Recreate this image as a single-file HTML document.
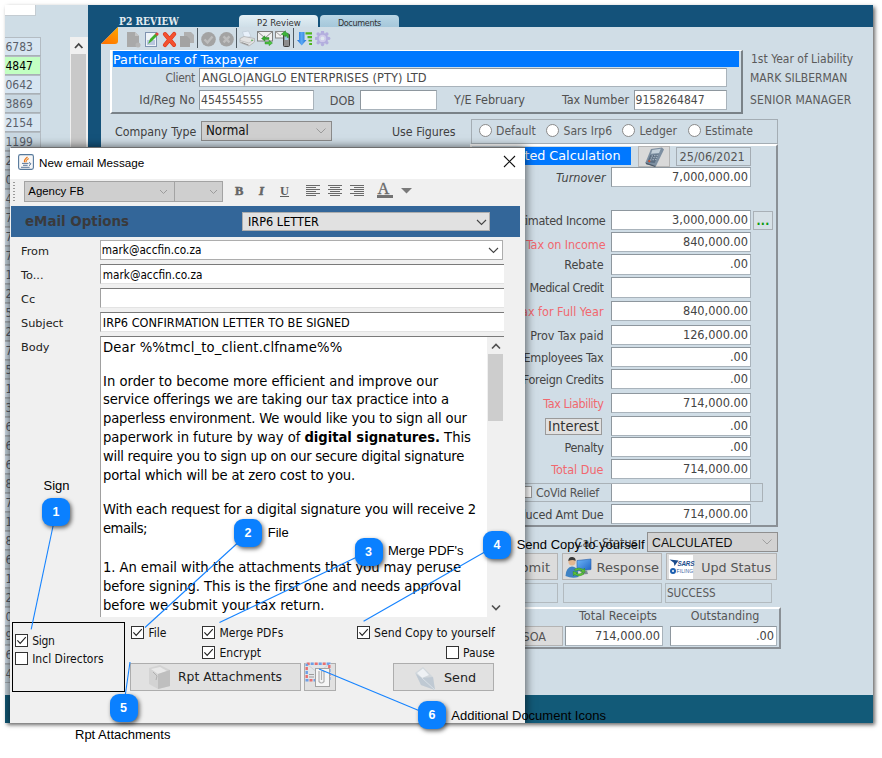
<!DOCTYPE html>
<html><head><meta charset="utf-8"><title>New email Message</title>
<style>
html,body{margin:0;padding:0}
body{width:882px;height:758px;background:#fff;position:relative;overflow:hidden;font-family:"DejaVu Sans Condensed","Liberation Sans",sans-serif;font-size:12px;color:#4a4a4a}
div,span{position:absolute;box-sizing:border-box;white-space:nowrap}
.app{font-family:"DejaVu Sans Condensed","Liberation Sans",sans-serif}
.ui{font-family:"Liberation Sans",sans-serif}
.vd{font-family:"DejaVu Sans",sans-serif}
.fld{background:#fff;border:1px solid #a9b3bb;border-top-color:#8e979e;border-left-color:#8e979e}
.num{text-align:right;font-size:12.650px;color:#444;padding-right:2px;line-height:18px}
.lbl{font-size:12.5px;color:#3c3c3c;text-align:right}
.red{color:#f0606a}
.bt{font-size:13.2px;line-height:19px;color:#000}
</style></head><body>
<!--SHOT-->
<div id="shot" style="left:5px;top:5px;width:868px;height:718px;background:#d0dde6;box-shadow:2px 2px 4px rgba(0,0,0,.6);overflow:hidden"></div>
<!--LEFT-->
<div style="left:5px;top:5px;width:83px;height:718px;background:#cfdde6"></div>
<div style="left:5px;top:5px;width:31px;height:11px;background:#fff;border-right:1px solid #c4ccd2;border-bottom:1px solid #c4ccd2"></div>
<div style="left:5px;top:37px;width:36px;height:19px;background:#d7e5f1;border:1px solid #b4bcc3;border-left:none;border-bottom-color:#a9b0b6;color:#5a5f6a;font-size:12px;line-height:18px;padding-left:0.5px">6783</div>
<div style="left:5px;top:56px;width:36px;height:19px;background:#c2ffc2;border:1px solid #b4bcc3;border-left:none;border-bottom-color:#a9b0b6;color:#000;font-size:12px;line-height:18px;padding-left:0.5px">4847</div>
<div style="left:5px;top:75px;width:36px;height:19px;background:#d7e5f1;border:1px solid #b4bcc3;border-left:none;border-bottom-color:#a9b0b6;color:#5a5f6a;font-size:12px;line-height:18px;padding-left:0.5px">0642</div>
<div style="left:5px;top:94px;width:36px;height:19px;background:#c9d8e2;border:1px solid #b4bcc3;border-left:none;border-bottom-color:#a9b0b6;color:#5a5f6a;font-size:12px;line-height:18px;padding-left:0.5px">3869</div>
<div style="left:5px;top:113px;width:36px;height:19px;background:#d7e5f1;border:1px solid #b4bcc3;border-left:none;border-bottom-color:#a9b0b6;color:#5a5f6a;font-size:12px;line-height:18px;padding-left:0.5px">2154</div>
<div style="left:5px;top:132px;width:36px;height:19px;background:#c9d8e2;border:1px solid #b4bcc3;border-left:none;border-bottom-color:#a9b0b6;color:#5a5f6a;font-size:12px;line-height:18px;padding-left:0.5px">1199</div>
<div style="left:5px;top:151px;width:36px;height:19px;background:#d7e5f1;border:1px solid #b4bcc3;border-left:none;border-bottom-color:#a9b0b6;color:#5a5f6a;font-size:12px;line-height:18px;padding-left:0.5px">2877</div>
<div style="left:5px;top:170px;width:36px;height:19px;background:#c9d8e2;border:1px solid #b4bcc3;border-left:none;border-bottom-color:#a9b0b6;color:#5a5f6a;font-size:12px;line-height:18px;padding-left:0.5px">0311</div>
<div style="left:5px;top:189px;width:36px;height:19px;background:#d7e5f1;border:1px solid #b4bcc3;border-left:none;border-bottom-color:#a9b0b6;color:#5a5f6a;font-size:12px;line-height:18px;padding-left:0.5px">4520</div>
<div style="left:5px;top:208px;width:36px;height:19px;background:#c9d8e2;border:1px solid #b4bcc3;border-left:none;border-bottom-color:#a9b0b6;color:#5a5f6a;font-size:12px;line-height:18px;padding-left:0.5px">7733</div>
<div style="left:5px;top:227px;width:36px;height:19px;background:#d7e5f1;border:1px solid #b4bcc3;border-left:none;border-bottom-color:#a9b0b6;color:#5a5f6a;font-size:12px;line-height:18px;padding-left:0.5px">7018</div>
<div style="left:5px;top:246px;width:36px;height:19px;background:#c9d8e2;border:1px solid #b4bcc3;border-left:none;border-bottom-color:#a9b0b6;color:#5a5f6a;font-size:12px;line-height:18px;padding-left:0.5px">7245</div>
<div style="left:5px;top:265px;width:36px;height:19px;background:#d7e5f1;border:1px solid #b4bcc3;border-left:none;border-bottom-color:#a9b0b6;color:#5a5f6a;font-size:12px;line-height:18px;padding-left:0.5px">1190</div>
<div style="left:5px;top:284px;width:36px;height:19px;background:#c9d8e2;border:1px solid #b4bcc3;border-left:none;border-bottom-color:#a9b0b6;color:#5a5f6a;font-size:12px;line-height:18px;padding-left:0.5px">2264</div>
<div style="left:5px;top:303px;width:36px;height:19px;background:#d7e5f1;border:1px solid #b4bcc3;border-left:none;border-bottom-color:#a9b0b6;color:#5a5f6a;font-size:12px;line-height:18px;padding-left:0.5px">5102</div>
<div style="left:5px;top:322px;width:36px;height:19px;background:#c9d8e2;border:1px solid #b4bcc3;border-left:none;border-bottom-color:#a9b0b6;color:#5a5f6a;font-size:12px;line-height:18px;padding-left:0.5px">2471</div>
<div style="left:5px;top:341px;width:36px;height:19px;background:#d7e5f1;border:1px solid #b4bcc3;border-left:none;border-bottom-color:#a9b0b6;color:#5a5f6a;font-size:12px;line-height:18px;padding-left:0.5px">7719</div>
<div style="left:5px;top:360px;width:36px;height:19px;background:#c9d8e2;border:1px solid #b4bcc3;border-left:none;border-bottom-color:#a9b0b6;color:#5a5f6a;font-size:12px;line-height:18px;padding-left:0.5px">5530</div>
<div style="left:5px;top:379px;width:36px;height:19px;background:#d7e5f1;border:1px solid #b4bcc3;border-left:none;border-bottom-color:#a9b0b6;color:#5a5f6a;font-size:12px;line-height:18px;padding-left:0.5px">1284</div>
<div style="left:5px;top:398px;width:36px;height:19px;background:#c9d8e2;border:1px solid #b4bcc3;border-left:none;border-bottom-color:#a9b0b6;color:#5a5f6a;font-size:12px;line-height:18px;padding-left:0.5px">3905</div>
<div style="left:5px;top:417px;width:36px;height:19px;background:#d7e5f1;border:1px solid #b4bcc3;border-left:none;border-bottom-color:#a9b0b6;color:#5a5f6a;font-size:12px;line-height:18px;padding-left:0.5px">6017</div>
<div style="left:5px;top:436px;width:36px;height:19px;background:#c9d8e2;border:1px solid #b4bcc3;border-left:none;border-bottom-color:#a9b0b6;color:#5a5f6a;font-size:12px;line-height:18px;padding-left:0.5px">6648</div>
<div style="left:5px;top:455px;width:36px;height:19px;background:#d7e5f1;border:1px solid #b4bcc3;border-left:none;border-bottom-color:#a9b0b6;color:#5a5f6a;font-size:12px;line-height:18px;padding-left:0.5px">6120</div>
<div style="left:5px;top:474px;width:36px;height:19px;background:#c9d8e2;border:1px solid #b4bcc3;border-left:none;border-bottom-color:#a9b0b6;color:#5a5f6a;font-size:12px;line-height:18px;padding-left:0.5px">8342</div>
<div style="left:5px;top:493px;width:36px;height:19px;background:#d7e5f1;border:1px solid #b4bcc3;border-left:none;border-bottom-color:#a9b0b6;color:#5a5f6a;font-size:12px;line-height:18px;padding-left:0.5px">7754</div>
<div style="left:5px;top:512px;width:36px;height:19px;background:#c9d8e2;border:1px solid #b4bcc3;border-left:none;border-bottom-color:#a9b0b6;color:#5a5f6a;font-size:12px;line-height:18px;padding-left:0.5px">1163</div>
<div style="left:5px;top:531px;width:36px;height:19px;background:#d7e5f1;border:1px solid #b4bcc3;border-left:none;border-bottom-color:#a9b0b6;color:#5a5f6a;font-size:12px;line-height:18px;padding-left:0.5px">8871</div>
<div style="left:5px;top:550px;width:36px;height:19px;background:#c9d8e2;border:1px solid #b4bcc3;border-left:none;border-bottom-color:#a9b0b6;color:#5a5f6a;font-size:12px;line-height:18px;padding-left:0.5px">6620</div>
<div style="left:5px;top:569px;width:36px;height:19px;background:#d7e5f1;border:1px solid #b4bcc3;border-left:none;border-bottom-color:#a9b0b6;color:#5a5f6a;font-size:12px;line-height:18px;padding-left:0.5px">1439</div>
<div style="left:5px;top:588px;width:36px;height:19px;background:#c9d8e2;border:1px solid #b4bcc3;border-left:none;border-bottom-color:#a9b0b6;color:#5a5f6a;font-size:12px;line-height:18px;padding-left:0.5px">2208</div>
<div style="left:5px;top:607px;width:36px;height:19px;background:#d7e5f1;border:1px solid #b4bcc3;border-left:none;border-bottom-color:#a9b0b6;color:#5a5f6a;font-size:12px;line-height:18px;padding-left:0.5px">0915</div>
<div style="left:5px;top:626px;width:36px;height:19px;background:#c9d8e2;border:1px solid #b4bcc3;border-left:none;border-bottom-color:#a9b0b6;color:#5a5f6a;font-size:12px;line-height:18px;padding-left:0.5px">9127</div>
<div style="left:5px;top:645px;width:36px;height:19px;background:#d7e5f1;border:1px solid #b4bcc3;border-left:none;border-bottom-color:#a9b0b6;color:#5a5f6a;font-size:12px;line-height:18px;padding-left:0.5px">6004</div>
<div style="left:5px;top:664px;width:36px;height:19px;background:#c9d8e2;border:1px solid #b4bcc3;border-left:none;border-bottom-color:#a9b0b6;color:#5a5f6a;font-size:12px;line-height:18px;padding-left:0.5px">4410</div>
<div style="left:70px;top:37px;width:18px;height:656px;background:#f0f0f0"></div>
<div style="left:71px;top:54px;width:15px;height:200px;background:#c9c9c9"></div>
<svg style="position:absolute;left:70px;top:37px" width="18" height="17" viewBox="0 0 18 17"><path d="M5 11 L8.7 7 L12.4 11" fill="none" stroke="#444" stroke-width="1.8"/></svg>
<!--/LEFT-->
<!--MAIN-->
<div style="left:88px;top:5px;width:785px;height:22px;background:#14527a"></div>
<div style="left:88px;top:27px;width:13px;height:670px;background:#14527a"></div>
<div style="left:5px;top:695px;width:868px;height:28px;background:#125a78"></div>
<svg style="position:absolute;left:100px;top:26px" width="20" height="20" viewBox="0 0 20 20"><defs><linearGradient id="og" x1="1" y1="0" x2="0.3" y2="1"><stop offset="0" stop-color="#ffa800"/><stop offset="1" stop-color="#ff7400"/></linearGradient></defs><path d="M0 0 H19 L0 19 Z" fill="#14527a"/><path d="M18 1 V15 Q18 18 15 18 H1 Z" fill="url(#og)"/></svg>
<div style="left:119px;top:14px;font-family:'DejaVu Serif Condensed','Liberation Serif',serif;font-weight:bold;font-size:10.200px;color:#e3ebf0;line-height:14px">P2 REVIEW</div>
<div style="left:239.300px;top:14.500px;width:79.200px;height:12.500px;background:linear-gradient(#e4f0f6,#cfdfe8);border-radius:4px 4px 0 0;font-size:9.500px;line-height:15px;text-align:center;color:#333">P2 Review</div>
<div style="left:319.800px;top:14.500px;width:79.200px;height:12.500px;background:linear-gradient(#b9d6e6,#a5c7da);border-radius:4px 4px 0 0;font-size:9px;line-height:16px;text-align:center;color:#333;letter-spacing:-0.35px">Documents</div>
<svg style="position:absolute;left:126px;top:30.700px" width="16" height="18" viewBox="0 0 16 18"><path d="M1 1 H9 L13 5 V16 H1 Z" fill="#a9a9a9"/><path d="M9 1 V5 H13" fill="#c4c4c4"/><circle cx="12" cy="14" r="2.5" fill="#b5b5b5"/></svg>
<svg style="position:absolute;left:144px;top:30.700px" width="16" height="18" viewBox="0 0 16 18"><rect x="1.5" y="1.5" width="11" height="14" fill="#eef3f8" stroke="#7f93b0"/><rect x="3" y="9" width="8" height="5" fill="#b9c7e0"/><path d="M4 13 L6 8 L12 2 L14 4 L8 10 Z" fill="#3fae2a"/><circle cx="13" cy="3" r="1.6" fill="#e0433a"/></svg>
<svg style="position:absolute;left:161px;top:30.700px" width="17" height="18" viewBox="0 0 17 18"><path d="M4 3.200 L13 13.800 M13.200 3 L4 14" fill="none" stroke="#d8351a" stroke-width="4.200" stroke-linecap="round"/><path d="M4 3.200 L13 13.800 M13.200 3 L4 14" fill="none" stroke="#f4512f" stroke-width="3" stroke-linecap="round"/></svg>
<svg style="position:absolute;left:179px;top:30.700px" width="17" height="18" viewBox="0 0 17 18"><path d="M5 1 H12 L15 4 V12 H5 Z" fill="#b0b0b0"/><path d="M1 5 H8 L11 8 V16 H1 Z" fill="#a3a3a3"/></svg>
<div style="left:197px;top:28px;width:1px;height:20px;background:#4f5a62"></div>
<svg style="position:absolute;left:200px;top:31px" width="17" height="17" viewBox="0 0 17 17"><circle cx="8.5" cy="8.3" r="7.3" fill="#a3a3a3"/><path d="M4.500 8.500 L7.500 11.500 L12.500 5.500" fill="none" stroke="#bdbdbd" stroke-width="2.400"/></svg>
<svg style="position:absolute;left:218px;top:31px" width="17" height="17" viewBox="0 0 17 17"><circle cx="8.5" cy="8.3" r="7.3" fill="#a3a3a3"/><path d="M5.500 5.300 L11.500 11.300 M11.500 5.300 L5.500 11.300" fill="none" stroke="#bdbdbd" stroke-width="2.400"/></svg>
<div style="left:236px;top:28px;width:1px;height:20px;background:#4f5a62"></div>
<svg style="position:absolute;left:239px;top:30px" width="17" height="17" viewBox="0 0 17 17"><path d="M3.500 2 L9.500 1 L12 6.500 L5.500 8 Z" fill="#e8f1fb" stroke="#b9c4d0" stroke-width=".6"/><path d="M1 8.500 L5 6.500 L15.500 8.500 L15.500 12 L10 16 L1 12.500 Z" fill="#e3e3e3" stroke="#a9a9a9" stroke-width=".7"/><path d="M1 10.500 L10 13 L15.500 9.500" fill="none" stroke="#bdbdbd" stroke-width=".8"/><path d="M2.500 12.500 L9.500 15" stroke="#8f8f8f" stroke-width="1"/><circle cx="13" cy="10.300" r=".8" fill="#3aa83a"/></svg>
<svg style="position:absolute;left:257px;top:30px" width="17" height="17" viewBox="0 0 17 17"><rect x="0.500" y="1.500" width="15" height="9.500" fill="#f0f0f0" stroke="#7d7d7d"/><path d="M0.500 1.500 L8 8 L15.500 1.500" fill="none" stroke="#8a8a8a"/><path d="M4.500 8.500 L8 5.800 V7.500 H12 V9.500 H8 V11.200 Z" fill="#35a82f" stroke="#1f7d1f" stroke-width=".4"/><path d="M15.500 13 L12 10.300 V12 H8 V14 H12 V15.700 Z" fill="#4cc43f" stroke="#1f7d1f" stroke-width=".4"/></svg>
<svg style="position:absolute;left:275px;top:30px" width="17" height="18" viewBox="0 0 17 18"><rect x="0.500" y="1.500" width="9.500" height="6.500" fill="#f0f0f0" stroke="#8a8a8a"/><path d="M0.500 1.500 L5.200 5.500 L10 1.500" fill="none" stroke="#9a9a9a"/><rect x="8.500" y="4" width="6" height="12.500" rx="1" fill="#8d8d8d" stroke="#3f3f3f"/><rect x="9.800" y="6" width="3.400" height="4" fill="#9ec9e6"/><path d="M6.500 4 L10.500 0.800 V2.500 Q14 2.500 13.500 7.500 H12 Q12 5 10.500 5 V6.800 Z" fill="#3db53a" stroke="#1f7d1f" stroke-width=".4"/></svg>
<div style="left:293px;top:28px;width:1px;height:20px;background:#4f5a62"></div>
<svg style="position:absolute;left:296px;top:31px" width="17" height="16" viewBox="0 0 17 16"><defs><linearGradient id="ba" x1="0" y1="0" x2="1" y2="0"><stop offset="0" stop-color="#1f6fd6"/><stop offset=".5" stop-color="#5aa9f5"/><stop offset="1" stop-color="#1f6fd6"/></linearGradient></defs><path d="M3 1 H8.500 V9 H10.500 L5.700 14.500 L1 9 H3 Z" fill="url(#ba)"/><path d="M9.500 1.200 H16 V3.600 H9.500 Z M11.500 5 H16 V7.300 H11.500 Z M12.500 8.700 H16 V10.500 H12.500 Z M13.200 12 H16 V14 H13.200 Z" fill="#4fb51e"/></svg>
<svg style="position:absolute;left:315px;top:31px" width="16" height="16" viewBox="0 0 16 16"><circle cx="13.70" cy="7.40" r="1.7" fill="#b3aede"/><circle cx="11.88" cy="11.78" r="1.7" fill="#b3aede"/><circle cx="7.50" cy="13.60" r="1.7" fill="#b3aede"/><circle cx="3.12" cy="11.78" r="1.7" fill="#b3aede"/><circle cx="1.30" cy="7.40" r="1.7" fill="#b3aede"/><circle cx="3.12" cy="3.02" r="1.7" fill="#b3aede"/><circle cx="7.50" cy="1.20" r="1.7" fill="#b3aede"/><circle cx="11.88" cy="3.02" r="1.7" fill="#b3aede"/><circle cx="7.500" cy="7.400" r="5.600" fill="#b3aede"/><circle cx="7.500" cy="7.400" r="3.700" fill="#cfcbea"/><circle cx="7.500" cy="7.400" r="1.900" fill="#dfe8ee"/></svg>
<div style="left:110px;top:50px;width:633px;height:64px;border-left:2px solid #fff;border-top:1px solid #fff;border-right:2px solid #7a8288;border-bottom:2px solid #7a8288"></div>
<div style="left:113px;top:51px;width:626px;height:16px;background:#0078ff;color:#fff;font-family:'DejaVu Sans',sans-serif;font-size:12.750px;line-height:17px">Particulars of Taxpayer</div>
<div class="lbl" style="left:115px;top:70px;width:80px;line-height:16px;font-size:12px;letter-spacing:-0.3px;color:#5a5a5a">Client</div>
<div class="fld" style="left:199px;top:68px;width:528px;height:19px;font-size:12.7px;line-height:17px;padding-left:2px;letter-spacing:0.06px;color:#4a4a4a">ANGLO|ANGLO ENTERPRISES (PTY) LTD</div>
<div class="lbl" style="left:115px;top:92px;width:80px;line-height:16px;font-size:12.8px;color:#505050">Id/Reg No</div>
<div class="fld" style="left:199px;top:90px;width:115px;height:20px;font-size:12.1px;line-height:18.500px;padding-left:1px;color:#4a4a4a">454554555</div>
<div class="lbl" style="left:320px;top:93px;width:35px;line-height:16px;font-size:12.5px;color:#505050">DOB</div>
<div class="fld" style="left:360px;top:90px;width:77px;height:20px"></div>
<div class="lbl" style="left:440px;top:92px;width:85px;line-height:16px;font-size:12.5px;color:#505050">Y/E February</div>
<div class="lbl" style="left:550px;top:92px;width:79px;line-height:16px;font-size:12.5px;color:#505050">Tax Number</div>
<div class="fld" style="left:634px;top:90px;width:93px;height:20px;font-size:12.1px;line-height:18.500px;padding-left:0.500px;color:#4a4a4a">9158264847</div>
<div style="left:751px;top:51px;font-size:12px;line-height:16px;color:#5a5a5a">1st Year of Liability</div>
<div style="left:750px;top:70px;font-size:12px;line-height:16px;color:#5a5a5a">MARK SILBERMAN</div>
<div style="left:750px;top:92px;font-size:12px;line-height:16px;letter-spacing:0.170px;color:#5a5a5a">SENIOR MANAGER</div>
<div style="left:115px;top:124px;font-size:12.3px;line-height:16px;color:#404040">Company Type</div>
<div style="left:201px;top:121px;width:131px;height:20px;background:#cfcfcf;border:1px solid #8a8a8a;font-size:13.200px;line-height:18.500px;padding-left:4px;color:#111">Normal</div>
<svg style="position:absolute;left:315px;top:127px" width="12" height="8" viewBox="0 0 12 8"><path d="M1.500 1.500 L6 6 L10.500 1.500" fill="none" stroke="#9a9a9a" stroke-width="1"/></svg>
<div style="left:392px;top:124px;font-size:12.3px;line-height:16px;color:#404040">Use Figures</div>
<div style="left:471px;top:119px;width:307px;height:25px;border:1px solid #a4adb4"></div>
<div style="left:479.0px;top:124px;width:13px;height:13px;border-radius:50%;background:#fff;border:1px solid #8a8a8a"></div>
<div style="left:496px;top:123px;font-size:12.100px;line-height:16px;color:#5a5a5a">Default</div>
<div style="left:546.0px;top:124px;width:13px;height:13px;border-radius:50%;background:#fff;border:1px solid #8a8a8a"></div>
<div style="left:563.5px;top:123px;font-size:12.100px;line-height:16px;color:#5a5a5a">Sars Irp6</div>
<div style="left:622.0px;top:124px;width:13px;height:13px;border-radius:50%;background:#fff;border:1px solid #8a8a8a"></div>
<div style="left:639.5px;top:123px;font-size:12.100px;line-height:16px;color:#5a5a5a">Ledger</div>
<div style="left:687.5px;top:124px;width:13px;height:13px;border-radius:50%;background:#fff;border:1px solid #8a8a8a"></div>
<div style="left:705px;top:123px;font-size:12.100px;line-height:16px;color:#5a5a5a">Estimate</div>
<div style="left:470px;top:144px;width:308px;height:383px;border-top:2px solid #fff;border-left:2px solid #fff;border-right:2px solid #8a9096;border-bottom:2px solid #8a9096"></div>
<div style="left:473px;top:147px;width:158px;height:18px;background:#0078ff;color:#fff;font-family:'DejaVu Sans',sans-serif;font-size:12.750px;line-height:18px;text-align:right;padding-right:10.500px">Estimated Calculation</div>
<div style="left:638px;top:146px;width:32px;height:21px;background:#d9d9d9;border:1px solid #b5b5b5"></div>
<svg style="position:absolute;left:643px;top:146px" width="24" height="22" viewBox="0 0 24 22"><path d="M8 3 L19 1.500 L21 3.500 L13 20 L3.500 18.500 L2.500 16.500 Z" fill="#7d8fa1"/><path d="M9.300 4 L17.800 2.800 L16 7 L8 7.800 Z" fill="#c3d0da"/><path d="M7.300 9 L15.500 8.200 L11.600 17 L4.300 16.200 Z" fill="#5b6d80"/><path d="M8.500 10 L10 9.900 M11 9.800 L12.500 9.600 M13.500 9.500 L15 9.300 M7.700 12 L9.200 11.900 M10.200 11.800 L11.700 11.600 M12.700 11.500 L14.200 11.300 M6.900 14 L8.400 13.900 M9.400 13.800 L10.900 13.600 M11.900 13.500 L13.400 13.300" stroke="#aab8c5" stroke-width="1.100"/><circle cx="6.300" cy="15.200" r="1.100" fill="#d6532e"/><path d="M2.500 16.500 L13 20 L12 21 L3 18 Z" fill="#4a5867"/></svg>
<div style="left:676px;top:147px;width:75px;height:19px;border:1px solid #a4acb3;font-size:12.600px;line-height:17px;padding-left:2.500px;color:#555">25/06/2021</div>
<div class="fld num" style="left:611px;top:167px;width:140px;height:20px">7,000,000.00</div>
<div class="lbl" style="left:455.500px;top:170px;width:150px;line-height:16px;font-style:italic;color:#444">Turnover</div>
<div class="fld num" style="left:611px;top:210px;width:140px;height:20px">3,000,000.00</div>
<div class="lbl" style="left:455.500px;top:213px;width:150px;line-height:16px;color:#444;letter-spacing:-0.3px">Estimated Income</div>
<div class="fld num" style="left:611px;top:232px;width:140px;height:20px">840,000.00</div>
<div class="lbl" style="left:455.500px;top:237px;width:150px;line-height:16px;color:#f1686f;letter-spacing:-0.1px">Tax on Income</div>
<div class="fld num" style="left:611px;top:254px;width:140px;height:21px">.00</div>
<div class="lbl" style="left:453.500px;top:257px;width:150px;line-height:16px;color:#444;letter-spacing:-0.05px">Rebate</div>
<div class="fld num" style="left:611px;top:277px;width:140px;height:21px"></div>
<div class="lbl" style="left:453.500px;top:280px;width:150px;line-height:16px;color:#444;letter-spacing:-0.46px">Medical Credit</div>
<div class="fld num" style="left:611px;top:301px;width:140px;height:20px">840,000.00</div>
<div class="lbl" style="left:453.500px;top:304px;width:150px;line-height:16px;color:#f1686f;letter-spacing:0px">Tax for Full Year</div>
<div class="fld num" style="left:611px;top:325px;width:140px;height:20px">126,000.00</div>
<div class="lbl" style="left:453.500px;top:328px;width:150px;line-height:16px;color:#444;letter-spacing:-0.08px">Prov Tax paid</div>
<div class="fld num" style="left:611px;top:347px;width:140px;height:20px">.00</div>
<div class="lbl" style="left:453.500px;top:350px;width:150px;line-height:16px;color:#444;letter-spacing:-0.27px">Employees Tax</div>
<div class="fld num" style="left:611px;top:369px;width:140px;height:20px">.00</div>
<div class="lbl" style="left:453.500px;top:372px;width:150px;line-height:16px;color:#444;letter-spacing:-0.27px">Foreign Credits</div>
<div class="fld num" style="left:611px;top:393px;width:140px;height:20px">714,000.00</div>
<div class="lbl" style="left:453.500px;top:396px;width:150px;line-height:16px;color:#f1686f;letter-spacing:-0.43px">Tax Liability</div>
<div class="fld num" style="left:611px;top:416px;width:140px;height:20px">.00</div>
<div class="fld num" style="left:611px;top:437px;width:140px;height:20px">.00</div>
<div class="lbl" style="left:453.500px;top:440px;width:150px;line-height:16px;color:#444;letter-spacing:-0.34px">Penalty</div>
<div class="fld num" style="left:611px;top:459px;width:140px;height:20px">714,000.00</div>
<div class="lbl" style="left:453.500px;top:462px;width:150px;line-height:16px;color:#f1686f">Total Due</div>
<div class="fld num" style="left:611px;top:483px;width:140px;height:19px"></div>
<div class="fld num" style="left:611px;top:504px;width:140px;height:20px">714,000.00</div>
<div class="lbl" style="left:453.500px;top:507px;width:150px;line-height:16px;color:#444;letter-spacing:-0.2px">Reduced Amt Due</div>
<div style="left:753px;top:211px;width:20px;height:19px;background:#d6e0e6;border:1px solid #a9b0b6;color:#0a9a0a;font-size:12px;line-height:19px;text-align:center;font-weight:bold;letter-spacing:0.300px">...</div>
<div style="left:545px;top:418px;width:57px;height:17px;background:#e1e1e1;border:1px solid #9a9a9a;font-family:'DejaVu Sans',sans-serif;font-size:13.200px;line-height:15px;text-align:center;color:#333">Interest</div>
<div style="left:520px;top:483px;width:243px;height:19px;border:1px solid #a9b1b7"></div>
<div style="left:519.500px;top:486px;width:12px;height:12px;background:#fff;border:1px solid #999"></div>
<div style="left:536px;top:485px;font-size:12.3px;line-height:16px;color:#555;letter-spacing:-0.27px">CoVid Relief</div>
<div class="lbl" style="left:540px;top:534.600px;width:97.200px;line-height:16px;font-size:12.500px;letter-spacing:-0.100px;color:#555">Calc Status</div>
<div class="ui" style="left:647px;top:532px;width:131px;height:20px;background:#d2d2d2;border:1px solid #8f8f8f;font-size:12.3px;line-height:21px;padding-left:4px;color:#111">CALCULATED</div>
<svg style="position:absolute;left:761px;top:538px" width="12" height="8" viewBox="0 0 12 8"><path d="M1.500 1.500 L6 6 L10.500 1.500" fill="none" stroke="#a0a0a0" stroke-width="1"/></svg>
<div style="left:470px;top:553px;width:88px;height:27px;background:#dcdcdc;border:1px solid #b4b4b4;font-family:'DejaVu Sans',sans-serif;font-size:13px;color:#555;line-height:27px;text-align:right;padding-right:7px">Submit</div>
<div style="left:562px;top:553px;width:100px;height:27px;background:#dcdcdc;border:1px solid #b4b4b4;font-family:'DejaVu Sans',sans-serif;font-size:13px;color:#555;line-height:27px;text-align:right;padding-right:2px">Response</div>
<div style="left:666px;top:553px;width:111px;height:27px;background:#dcdcdc;border:1px solid #b4b4b4;font-family:'DejaVu Sans',sans-serif;font-size:13px;color:#555;line-height:27px;text-align:right;padding-right:5px;font-size:12.700px">Upd Status</div>
<svg style="position:absolute;left:564px;top:555px" width="30" height="25" viewBox="0 0 30 25"><defs><linearGradient id="mon" x1="0" y1="0" x2="1" y2="1"><stop offset="0" stop-color="#6fb6f7"/><stop offset="1" stop-color="#1d62c4"/></linearGradient></defs><path d="M13 5.500 L27 4 L27 14.500 L13 16 Z" fill="url(#mon)" stroke="#2a5ea8" stroke-width=".6"/><path d="M18 16 L23 15.500 L24 19 L17 19.500 Z" fill="#7d8a96"/><ellipse cx="8" cy="6.500" rx="3.600" ry="4" fill="#e3b691"/><path d="M4.300 6 Q4.500 1.500 8.500 2 Q12 2.500 11.500 6 Q9 4 4.300 6 Z" fill="#3a3a3a"/><path d="M1.500 21 Q2 12 8 11.500 Q13 12 14 16.500 L14.500 22 Q8 24 1.500 21 Z" fill="#3f83c4"/><path d="M10 14.500 Q15 11.500 19.500 14.500 L20.500 13 L21 17.500 L16.500 16.500 L18 15.500 Q15 14 11.500 16 Z" fill="#5cc23a" stroke="#2f8f22" stroke-width=".5"/><path d="M20 19 Q15 22.500 10.500 19.500 L9.500 21 L9 16.500 L13.500 17.500 L12 18.500 Q15 20 18.500 17.500 Z" fill="#5cc23a" stroke="#2f8f22" stroke-width=".5"/></svg>
<div style="left:669px;top:555px;width:24px;height:24px;background:#fff"></div>
<div class="ui" style="left:677.500px;top:558.500px;font-size:6.300px;font-weight:bold;font-style:italic;color:#1c4c8c;line-height:9px;letter-spacing:-0.2px">SARS</div><svg style="position:absolute;left:669px;top:559px" width="10" height="8" viewBox="0 0 10 8"><path d="M0.500 0.500 L9.500 1.500 L5.500 7 L4.800 3.800 Z" fill="#1c4c8c"/></svg>
<div class="ui" style="left:676.500px;top:568px;font-size:5px;color:#3a66a0;line-height:7px;letter-spacing:0.1px">FILING</div><div style="left:670px;top:568px;width:6px;height:6px;border-radius:50%;background:#1c5fb0"></div><div style="left:671.700px;top:569.700px;width:2.600px;height:2.600px;border-radius:50%;background:#fff"></div>
<div style="left:470px;top:583px;width:88px;height:20px;border:1px solid #b2babf;font-size:11.600px;line-height:19px;color:#5a5a5a;padding-left:1px"></div>
<div style="left:563px;top:583px;width:99px;height:20px;border:1px solid #b2babf;font-size:11.600px;line-height:19px;color:#5a5a5a;padding-left:1px"></div>
<div style="left:665px;top:583px;width:107px;height:20px;border:1px solid #b2babf;font-size:11.600px;line-height:19px;color:#5a5a5a;padding-left:1px">SUCCESS</div>
<div style="left:470px;top:607px;width:311px;height:42px;border-top:2px solid #fff;border-left:2px solid #fff;border-right:2px solid #8a9096;border-bottom:2px solid #8a9096"></div>
<div style="left:569px;top:608px;width:98px;text-align:center;font-size:12.600px;line-height:16px;color:#555">Total Receipts</div>
<div style="left:672px;top:608px;width:106px;text-align:center;font-size:12.400px;line-height:16px;color:#555">Outstanding</div>
<div style="left:490px;top:626px;width:73px;height:20px;background:#dcdcdc;border:1px solid #b4b4b4;font-size:12.5px;line-height:19px;text-align:right;padding-right:16px;color:#555">SOA</div>
<div class="fld num" style="left:565px;top:626px;width:98px;height:20px;line-height:17px">714,000.00</div>
<div class="fld num" style="left:670px;top:626px;width:107px;height:20px;line-height:17px">.00</div>
<!--MAIN5-->
<!--DIALOG-->
<div style="left:5px;top:5px;width:868px;height:718px;overflow:hidden"><div id="dlg" style="left:4.500px;top:142px;width:515.800px;height:576px;background:#f0f0f0;box-shadow:0 1px 9px 1px rgba(0,0,0,.6);border-top:1px solid #6e6e6e;border-left:1px solid #f0f0f0;border-right:0"></div></div>
<div style="left:9.500px;top:148px;width:515.800px;height:31px;background:#fff"></div>
<svg style="position:absolute;left:18px;top:154px" width="16" height="16" viewBox="0 0 16 16"><rect x="0.600" y="0.600" width="14.800" height="14.800" rx="1.800" fill="#f7f7f7" stroke="#55789b" stroke-width="1.100"/><path d="M6.700 8.300 Q5.500 6 9.500 3" fill="none" stroke="#e8761a" stroke-width="1.300"/><path d="M8 8.300 Q7.500 6.500 10.800 4.600" fill="none" stroke="#ee8a2e" stroke-width="1.100"/><path d="M4 9.400 H10.500 M5 11.300 H9.600 M3 13.300 H11.600" stroke="#46688e" stroke-width="0.900"/><path d="M11 8.600 Q14.500 9.500 11 11.600" fill="none" stroke="#46688e" stroke-width="1"/></svg>
<div class="ui" style="left:39px;top:155px;font-size:11.7px;line-height:16px;color:#000">New email Message</div>
<svg style="position:absolute;left:503px;top:155px" width="13" height="13" viewBox="0 0 13 13"><path d="M1 1 L12 12 M12 1 L1 12" stroke="#111" stroke-width="1.100" fill="none"/></svg>
<div style="left:13px;top:182px;width:2px;height:20px;background:repeating-linear-gradient(#9a9a9a 0 1px,transparent 1px 3px)"></div>
<div class="ui" style="left:24px;top:181px;width:151px;height:21px;background:#cfcfcf;border:1px solid #a3a3a3;font-size:11.400px;line-height:19px;padding-left:3.300px;color:#000">Agency FB</div>
<div style="left:174px;top:181px;width:49px;height:21px;background:#cfcfcf;border:1px solid #a3a3a3"></div>
<svg style="position:absolute;left:159px;top:189px" width="9" height="6" viewBox="0 0 9 6"><path d="M1 1 L4.500 4.500 L8 1" fill="none" stroke="#9b9b9b" stroke-width="1"/></svg>
<svg style="position:absolute;left:209px;top:189px" width="9" height="6" viewBox="0 0 9 6"><path d="M1 1 L4.500 4.500 L8 1" fill="none" stroke="#9b9b9b" stroke-width="1"/></svg>
<div style="left:235px;top:183px;font-family:'Liberation Serif','DejaVu Serif',serif;color:#666;font-size:12.5px;line-height:16px;font-weight:bold;-webkit-text-stroke:0.500px #666">B</div>
<div style="left:259px;top:183px;font-family:'Liberation Serif','DejaVu Serif',serif;color:#5f5f5f;font-size:12.5px;line-height:16px;font-weight:bold;font-style:italic;-webkit-text-stroke:0.600px #666;color:#666">I</div>
<div style="left:280px;top:183px;font-family:'Liberation Serif','DejaVu Serif',serif;color:#5f5f5f;font-size:12.5px;line-height:16px;font-weight:bold;text-decoration:underline">U</div>
<svg style="position:absolute;left:306px;top:185px" width="14" height="12" viewBox="0 0 14 12"><rect x="0" y="0" width="14" height="1" fill="#6a6a6a"/><rect x="0" y="2" width="10" height="1" fill="#6a6a6a"/><rect x="0" y="4" width="14" height="1" fill="#6a6a6a"/><rect x="0" y="6" width="10" height="1" fill="#6a6a6a"/><rect x="0" y="8" width="14" height="1" fill="#6a6a6a"/><rect x="0" y="10" width="10" height="1" fill="#6a6a6a"/></svg>
<svg style="position:absolute;left:328px;top:185px" width="14" height="12" viewBox="0 0 14 12"><rect x="0.0" y="0" width="14" height="1" fill="#6a6a6a"/><rect x="2.0" y="2" width="10" height="1" fill="#6a6a6a"/><rect x="0.0" y="4" width="14" height="1" fill="#6a6a6a"/><rect x="2.0" y="6" width="10" height="1" fill="#6a6a6a"/><rect x="0.0" y="8" width="14" height="1" fill="#6a6a6a"/><rect x="2.0" y="10" width="10" height="1" fill="#6a6a6a"/></svg>
<svg style="position:absolute;left:350px;top:185px" width="14" height="12" viewBox="0 0 14 12"><rect x="0" y="0" width="14" height="1" fill="#6a6a6a"/><rect x="4" y="2" width="10" height="1" fill="#6a6a6a"/><rect x="0" y="4" width="14" height="1" fill="#6a6a6a"/><rect x="4" y="6" width="10" height="1" fill="#6a6a6a"/><rect x="0" y="8" width="14" height="1" fill="#6a6a6a"/><rect x="4" y="10" width="10" height="1" fill="#6a6a6a"/></svg>
<div style="left:377.500px;top:179.500px;font-family:'Liberation Serif','DejaVu Serif',serif;color:#6a6a6a;font-size:16.500px;line-height:18px;-webkit-text-stroke:0.300px #6a6a6a">A</div>
<div style="left:377px;top:195px;width:16px;height:3px;background:#737373"></div>
<svg style="position:absolute;left:401px;top:188px" width="11" height="6" viewBox="0 0 11 6"><path d="M0 0 H11 L5.500 5.500 Z" fill="#7a7a7a"/></svg>
<div style="left:10.500px;top:206px;width:509.500px;height:31px;background:#336699"></div>
<div style="left:25px;top:212px;font-weight:bold;font-size:14.9px;line-height:19px;color:#3a3a3c">eMail Options</div>
<div style="left:242px;top:212px;width:248px;height:19px;background:#e1e1e1;border:1px solid #adadad;font-size:12.6px;line-height:17px;padding-left:5px;color:#000">IRP6 LETTER</div>
<svg style="position:absolute;left:476px;top:219px" width="11" height="7" viewBox="0 0 11 7"><path d="M1 1 L5.500 5.500 L10 1" fill="none" stroke="#444" stroke-width="1.100"/></svg>
<div style="left:21px;top:245px;font-family:'DejaVu Sans',sans-serif;font-size:11.3px;line-height:14px;color:#222">From</div>
<div style="left:21px;top:269px;font-family:'DejaVu Sans',sans-serif;font-size:11.3px;line-height:14px;color:#222">To...</div>
<div style="left:21px;top:293px;font-family:'DejaVu Sans',sans-serif;font-size:11.3px;line-height:14px;color:#222">Cc</div>
<div style="left:21px;top:317px;font-family:'DejaVu Sans',sans-serif;font-size:11.3px;line-height:14px;color:#222">Subject</div>
<div style="left:21px;top:341px;font-family:'DejaVu Sans',sans-serif;font-size:11.3px;line-height:14px;color:#222">Body</div>
<div style="left:100px;top:240px;width:403px;height:20px;background:#fff;border:1px solid #adadad;font-size:11.7px;line-height:18.500px;padding-left:0.800px;color:#000">mark@accfin.co.za</div>
<svg style="position:absolute;left:488px;top:247px" width="11" height="7" viewBox="0 0 11 7"><path d="M1 1 L5.500 5.500 L10 1" fill="none" stroke="#444" stroke-width="1.100"/></svg>
<div style="left:100px;top:264px;width:404px;height:20px;background:#fff;border-top:1px solid #7a7a7a;border-left:1px solid #a0a0a0;border-bottom:1px solid #e3e3e3;font-size:11.7px;line-height:20px;padding-left:1.800px;color:#000">mark@accfin.co.za</div>
<div style="left:100px;top:288px;width:404px;height:20px;background:#fff;border-top:1px solid #7a7a7a;border-left:1px solid #a0a0a0;border-bottom:1px solid #e3e3e3;font-size:11.7px;line-height:20px;padding-left:1.800px;color:#000"></div>
<div style="left:100px;top:312px;width:404px;height:20px;background:#fff;border-top:1px solid #7a7a7a;border-left:1px solid #a0a0a0;border-bottom:1px solid #e3e3e3;font-size:11.7px;line-height:20px;padding-left:1.800px;color:#000;font-size:12.6px">IRP6 CONFIRMATION LETTER TO BE SIGNED</div>
<div style="left:100px;top:336px;width:404px;height:281px;background:#fff;border-top:1px solid #7a7a7a;border-left:1px solid #a0a0a0;overflow:hidden"></div>
<div style="left:487px;top:337px;width:17px;height:280px;background:#f0f0f0"></div>
<div style="left:488px;top:354px;width:15px;height:67px;background:#cdcdcd"></div>
<svg style="position:absolute;left:491px;top:343px" width="10" height="7" viewBox="0 0 10 7"><path d="M1 5.500 L5 1.500 L9 5.500" fill="none" stroke="#505050" stroke-width="1.600"/></svg>
<svg style="position:absolute;left:491px;top:604px" width="10" height="7" viewBox="0 0 10 7"><path d="M1 1.500 L5 5.500 L9 1.500" fill="none" stroke="#505050" stroke-width="1.600"/></svg>
<div class="vd bt" style="left:103px;top:338px;letter-spacing:0.145px">Dear %%tmcl_to_client.clfname%%</div>
<div class="vd bt" style="left:103px;top:372px;letter-spacing:-0.004px">In order to become more efficient and improve our</div>
<div class="vd bt" style="left:103px;top:390px;letter-spacing:-0.149px">service offerings we are taking our tax practice into a</div>
<div class="vd bt" style="left:103px;top:409px;letter-spacing:-0.182px">paperless environment. We would like you to sign all our</div>
<div class="vd bt" style="left:103px;top:428px;letter-spacing:-0.044px">paperwork in future by way of <b>digital signatures.</b> This</div>
<div class="vd bt" style="left:103px;top:447px;letter-spacing:-0.276px">will require you to sign up on our secure digital signature</div>
<div class="vd bt" style="left:103px;top:466px;letter-spacing:-0.183px">portal which will be at zero cost to you.</div>
<div class="vd bt" style="left:103px;top:500px;letter-spacing:-0.212px">With each request for a digital signature you will receive 2</div>
<div class="vd bt" style="left:103px;top:519px;letter-spacing:-0.529px">emails;</div>
<div class="vd bt" style="left:103px;top:558px;letter-spacing:-0.081px">1. An email with the attachments that you may peruse</div>
<div class="vd bt" style="left:103px;top:577px;letter-spacing:-0.102px">before signing. This is the first one and needs approval</div>
<div class="vd bt" style="left:103px;top:596px;letter-spacing:-0.042px">before we submit your tax return.</div>
<div style="left:15px;top:634px;width:13px;height:13px;background:#fff;border:1px solid #333"></div>
<svg style="position:absolute;left:15px;top:634px" width="13" height="13" viewBox="0 0 13 13"><path d="M2.400 6.300 L5.200 9.400 L10.800 3.200" fill="none" stroke="#222" stroke-width="1.100"/></svg>
<div style="left:32.200px;top:633px;font-size:12px;line-height:17px;letter-spacing:-0.300px;color:#111">Sign</div>
<div style="left:15px;top:652px;width:13px;height:13px;background:#fff;border:1px solid #333"></div>
<div style="left:32.200px;top:651px;font-size:12px;line-height:17px;color:#111">Incl Directors</div>
<div style="left:131px;top:626px;width:13px;height:13px;background:#fff;border:1px solid #333"></div>
<svg style="position:absolute;left:131px;top:626px" width="13" height="13" viewBox="0 0 13 13"><path d="M2.400 6.300 L5.200 9.400 L10.800 3.200" fill="none" stroke="#222" stroke-width="1.100"/></svg>
<div style="left:148.5px;top:625px;font-size:12px;line-height:17px;color:#111">File</div>
<div style="left:202px;top:626px;width:13px;height:13px;background:#fff;border:1px solid #333"></div>
<svg style="position:absolute;left:202px;top:626px" width="13" height="13" viewBox="0 0 13 13"><path d="M2.400 6.300 L5.200 9.400 L10.800 3.200" fill="none" stroke="#222" stroke-width="1.100"/></svg>
<div style="left:219.5px;top:625px;font-size:12px;line-height:17px;color:#111">Merge PDFs</div>
<div style="left:202px;top:646px;width:13px;height:13px;background:#fff;border:1px solid #333"></div>
<svg style="position:absolute;left:202px;top:646px" width="13" height="13" viewBox="0 0 13 13"><path d="M2.400 6.300 L5.200 9.400 L10.800 3.200" fill="none" stroke="#222" stroke-width="1.100"/></svg>
<div style="left:219.5px;top:645px;font-size:12px;line-height:17px;color:#111">Encrypt</div>
<div style="left:357px;top:626px;width:13px;height:13px;background:#fff;border:1px solid #333"></div>
<svg style="position:absolute;left:357px;top:626px" width="13" height="13" viewBox="0 0 13 13"><path d="M2.400 6.300 L5.200 9.400 L10.800 3.200" fill="none" stroke="#222" stroke-width="1.100"/></svg>
<div style="left:374px;top:625px;font-size:12px;line-height:17px;color:#111;font-size:12.2px">Send Copy to yourself</div>
<div style="left:446px;top:646px;width:13px;height:13px;background:#fff;border:1px solid #333"></div>
<div style="left:463px;top:645px;font-size:12px;line-height:17px;color:#111">Pause</div>
<div style="left:130px;top:663px;width:171px;height:28px;background:#e1e1e1;border:1px solid #adadad;font-family:'DejaVu Sans',sans-serif;font-size:12.35px;color:#222;line-height:27.400px;padding-left:47px">Rpt Attachments</div>
<svg style="position:absolute;left:146px;top:664px" width="27" height="26" viewBox="0 0 27 26"><path d="M3 4 L14 1 L24 6 L24 22 L12 25 L3 20 Z" fill="#cfcfcf" opacity=".8"/><path d="M5 5 L14 3 L21 7 L12 10 Z" fill="#e9e9e9"/><path d="M12 10 L24 6 L24 22 L12 25 Z" fill="#bdbdbd" opacity=".9"/><path d="M7 8 L11 12 L10 16" stroke="#b0b0b0" fill="none"/></svg>
<div style="left:304px;top:663px;width:32px;height:28px;background:#e1e1e1;border:1px solid #adadad;font-family:'DejaVu Sans',sans-serif;font-size:12.35px;color:#222;line-height:27.400px"></div>
<svg style="position:absolute;left:305px;top:662px" width="27" height="26" viewBox="0 0 27 26"><rect x="0.500" y="0.500" width="25" height="19" fill="#dde1e5"/><rect x="1.700" y="1.700" width="22.600" height="16.600" fill="none" stroke="#ea6f6f" stroke-width="2.400" stroke-dasharray="3 5"/><rect x="1.700" y="1.700" width="22.600" height="16.600" fill="none" stroke="#6d9fe6" stroke-width="2.400" stroke-dasharray="3 5" stroke-dashoffset="4"/><rect x="3" y="3" width="20" height="14" fill="#e3e6e9"/><path d="M3 3 L13 11 L23 3" fill="none" stroke="#cdd1d5"/><path d="M4 12.500 H9 M4 15 H9" stroke="#9d9d9d"/><rect x="10.500" y="6.500" width="14" height="18" fill="#f6f6f6" stroke="#a3a3a3"/><path d="M14 9 V19.500 Q16.500 22.500 19 19.500 V9.500 Q17.500 8 16.500 9.500 V18" fill="none" stroke="#b0b0b0" stroke-width="1.200"/></svg>
<div style="left:393px;top:663px;width:101px;height:28px;background:#e1e1e1;border:1px solid #adadad;font-family:'DejaVu Sans',sans-serif;font-size:12.35px;color:#222;line-height:27.400px;padding-left:50px;font-size:12.8px">Send</div>
<svg style="position:absolute;left:413px;top:665px" width="26" height="26" viewBox="0 0 26 26"><path d="M2 8 L10 2 L20 12 L22 25 L8 20 Z" fill="#cfd6dc" opacity=".9"/><path d="M4 8 L10 3.500 L16 10 L9 13 Z" fill="#eef1f4"/><path d="M3 9 L9 13 L20 12 L22 25 L8 20 Z" fill="#bcc7d1" opacity=".85"/><path d="M9 13 L22 25" stroke="#d9e0e6" stroke-width="1"/></svg>
<!--DIALOG3-->
<!--ANNOT-->
<div style="left:12px;top:622px;width:113px;height:70px;border:1px solid #000"></div>
<svg style="position:absolute;left:0;top:0" width="882" height="758" viewBox="0 0 882 758"><g stroke="#1583ff" stroke-width="1.100" fill="none"><line x1="56" y1="512" x2="31.2" y2="629.4"/><line x1="248" y1="533.5" x2="145" y2="627.5"/><line x1="368.5" y1="551.5" x2="219.5" y2="622.5"/><line x1="497" y1="545" x2="363.6" y2="621.3"/><line x1="130" y1="662" x2="123.5" y2="707.5"/><line x1="319" y1="669" x2="432" y2="716"/></g></svg>
<div class="ui" style="left:42px;top:498px;width:28px;height:28px;border-radius:9px;background:#0a80ff;box-shadow:1.500px 2px 4px rgba(0,0,0,.6);color:#fff;font-size:12.500px;font-weight:bold;line-height:28px;text-align:center">1</div>
<div class="ui" style="left:234px;top:519px;width:28px;height:28px;border-radius:9px;background:#0a80ff;box-shadow:1.500px 2px 4px rgba(0,0,0,.6);color:#fff;font-size:12.500px;font-weight:bold;line-height:28px;text-align:center">2</div>
<div class="ui" style="left:354.5px;top:537.5px;width:28px;height:28px;border-radius:9px;background:#0a80ff;box-shadow:1.500px 2px 4px rgba(0,0,0,.6);color:#fff;font-size:12.500px;font-weight:bold;line-height:28px;text-align:center">3</div>
<div class="ui" style="left:483px;top:531px;width:28px;height:28px;border-radius:9px;background:#0a80ff;box-shadow:1.500px 2px 4px rgba(0,0,0,.6);color:#fff;font-size:12.500px;font-weight:bold;line-height:28px;text-align:center">4</div>
<div class="ui" style="left:109.5px;top:693.5px;width:28px;height:28px;border-radius:9px;background:#0a80ff;box-shadow:1.500px 2px 4px rgba(0,0,0,.6);color:#fff;font-size:12.500px;font-weight:bold;line-height:28px;text-align:center">5</div>
<div class="ui" style="left:418px;top:701.300px;width:28px;height:28px;border-radius:9px;background:#0a80ff;box-shadow:1.500px 2px 4px rgba(0,0,0,.6);color:#fff;font-size:12.500px;font-weight:bold;line-height:28px;text-align:center">6</div>
<div class="ui" style="left:43.5px;top:477.7px;font-size:13px;line-height:16px;color:#000">Sign</div>
<div class="ui" style="left:267.7px;top:525.0px;font-size:13px;line-height:16px;color:#000">File</div>
<div class="ui" style="left:388px;top:543.3px;font-size:13px;line-height:16px;color:#000">Merge PDF's</div>
<div class="ui" style="left:516.7px;top:537.0px;font-size:13px;line-height:16px;color:#000">Send Copy to yourself</div>
<div class="ui" style="left:75px;top:727.0px;font-size:13px;line-height:16px;color:#000">Rpt Attachments</div>
<div class="ui" style="left:451.3px;top:707.700px;font-size:13px;line-height:16px;color:#000">Additional Document Icons</div>
<!--ANNOT2-->
</body></html>
